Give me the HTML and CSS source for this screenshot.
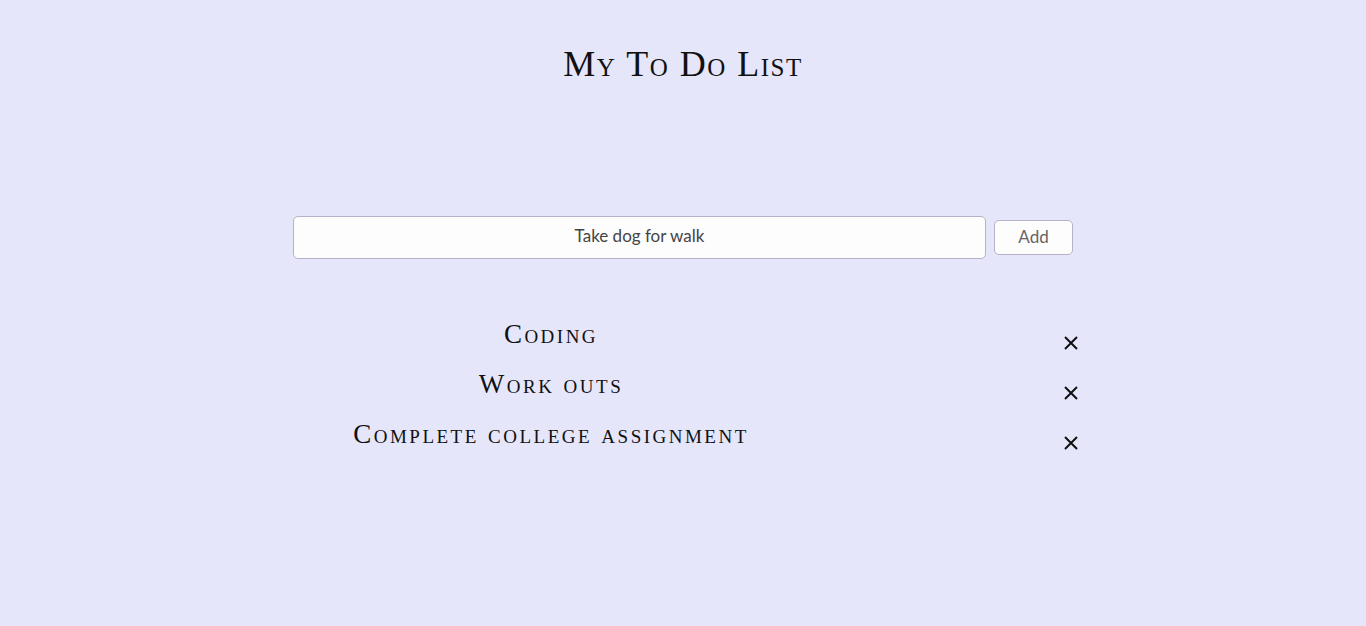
FILE: index.html
```html
<!DOCTYPE html>
<html>
<head>
<meta charset="utf-8">
<link rel="stylesheet" href="styles.css">
</head>
<body>
<div class="app">
  <h1 class="title">My To Do List</h1>
  <div class="entry">
    <input class="entry-input" type="text" value="Take dog for walk">
    <button class="entry-add">Add</button>
  </div>
  <ul class="todos">
    <li class="todo"><span class="todo-text">Coding</span><svg class="todo-del" viewBox="0 0 14 14" width="14" height="14"><path d="M1 1L13 13M13 1L1 13" stroke="#111" stroke-width="2" fill="none"/></svg></li>
    <li class="todo"><span class="todo-text">Work outs</span><svg class="todo-del" viewBox="0 0 14 14" width="14" height="14"><path d="M1 1L13 13M13 1L1 13" stroke="#111" stroke-width="2" fill="none"/></svg></li>
    <li class="todo"><span class="todo-text">Complete college assignment</span><svg class="todo-del" viewBox="0 0 14 14" width="14" height="14"><path d="M1 1L13 13M13 1L1 13" stroke="#111" stroke-width="2" fill="none"/></svg></li>
  </ul>
</div>
</body>
</html>
```
FILE: styles.css
```css
html, body {
  margin: 0;
  padding: 0;
  background: #e6e6fa;
  height: 100%;
}
.app {
  width: 780px;
  margin: 0 auto;
  display: flex;
  flex-direction: column;
  align-items: stretch;
}
.title {
  margin: 38px 0 0;
  text-align: center;
  font-family: "Liberation Serif", serif;
  font-variant: small-caps;
  font-weight: normal;
  font-size: 36px;
  line-height: 52px;
  letter-spacing: 1.5px;
  color: #111;
}
.entry {
  margin-top: 126px;
  display: flex;
  align-items: center;
  gap: 8px;
}
.entry-input {
  flex: 1;
  box-sizing: border-box;
  height: 43px;
  border: 1px solid #b4b2c8;
  border-radius: 5px;
  background: #fdfdfd;
  text-align: center;
  font-family: Lato, sans-serif;
  font-size: 17px;
  color: #444;
  padding: 0 8px 4px;
  outline: none;
}
.entry-add {
  box-sizing: border-box;
  width: 79px;
  height: 35px;
  border: 1px solid #b4b2c8;
  border-radius: 5px;
  background: #fdfdfd;
  font-family: Lato, sans-serif;
  font-size: 17px;
  color: #666;
  padding: 0 0 3px;
}
.todos {
  list-style: none;
  margin: 57px 0 0;
  padding: 0;
  display: flex;
  flex-direction: column;
  gap: 14px;
}
.todo {
  display: grid;
  grid-template-columns: 516px 1fr;
  align-items: center;
  height: 36px;
}
.todo-text {
  text-align: center;
  font-family: "Liberation Serif", serif;
  font-variant: small-caps;
  font-size: 27px;
  letter-spacing: 2.5px;
  color: #111;
}
.todo-del {
  justify-self: end;
  margin-right: -5px;
  margin-top: 18px;
}
```
